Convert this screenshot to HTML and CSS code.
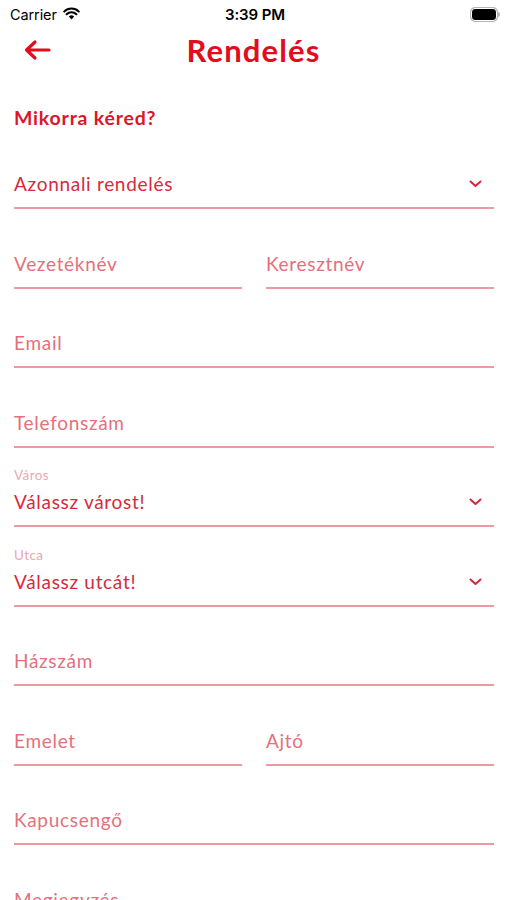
FILE: index.html
```html
<!DOCTYPE html>
<html lang="hu">
<head>
<meta charset="utf-8">
<title>Rendelés</title>
<link rel="stylesheet" href="styles.css">
</head>
<body>
<div class="screen">
  <div class="status">
    <div class="status-left">
      <span class="carrier">Carrier</span>
      <svg class="wifi" width="17" height="13" viewBox="0 0 17 13">
        <path d="M8.5 12.5 L5.9 9.6 A3.7 3.7 0 0 1 11.1 9.6 Z" fill="#000"/>
        <path d="M3.6 7.3 A6.9 6.9 0 0 1 13.4 7.3" fill="none" stroke="#000" stroke-width="2" stroke-linecap="round"/>
        <path d="M1.2 4.6 A10.3 10.3 0 0 1 15.8 4.6" fill="none" stroke="#000" stroke-width="2" stroke-linecap="round"/>
      </svg>
    </div>
    <span class="time">3:39 PM</span>
    <div class="battery"><div class="battery-fill"></div><div class="battery-tip"></div></div>
  </div>

  <div class="nav">
    <svg class="back" width="28" height="22" viewBox="0 0 28 22">
      <path d="M26 11 H4 M12 3 L3.5 11 L12 19" fill="none" stroke="#e30b1c" stroke-width="3.2" stroke-linecap="round" stroke-linejoin="round"/>
    </svg>
    <h1 class="title">Rendelés</h1>
  </div>

  <div class="content">
    <h2 class="section">Mikorra kéred?</h2>
    <div class="form">
      <div class="field select">
        <span class="value">Azonnali rendelés</span>
        <svg class="chev" width="13" height="8" viewBox="0 0 13 8"><path d="M1.5 1.5 L6.5 6 L11.5 1.5" fill="none" stroke="#d9243a" stroke-width="2" stroke-linecap="round" stroke-linejoin="round"/></svg>
      </div>
      <div class="row">
        <div class="field"><span class="ph">Vezetéknév</span></div>
        <div class="field"><span class="ph">Keresztnév</span></div>
      </div>
      <div class="field"><span class="ph">Email</span></div>
      <div class="field"><span class="ph">Telefonszám</span></div>
      <div class="field labeled">
        <span class="label">Város</span>
        <div class="select-line">
          <span class="value">Válassz várost!</span>
          <svg class="chev" width="13" height="8" viewBox="0 0 13 8"><path d="M1.5 1.5 L6.5 6 L11.5 1.5" fill="none" stroke="#d9243a" stroke-width="2" stroke-linecap="round" stroke-linejoin="round"/></svg>
        </div>
      </div>
      <div class="field labeled">
        <span class="label">Utca</span>
        <div class="select-line">
          <span class="value">Válassz utcát!</span>
          <svg class="chev" width="13" height="8" viewBox="0 0 13 8"><path d="M1.5 1.5 L6.5 6 L11.5 1.5" fill="none" stroke="#d9243a" stroke-width="2" stroke-linecap="round" stroke-linejoin="round"/></svg>
        </div>
      </div>
      <div class="field"><span class="ph">Házszám</span></div>
      <div class="row">
        <div class="field"><span class="ph">Emelet</span></div>
        <div class="field"><span class="ph">Ajtó</span></div>
      </div>
      <div class="field"><span class="ph">Kapucsengő</span></div>
      <div class="field"><span class="ph">Megjegyzés</span></div>
    </div>
  </div>
</div>
</body>
</html>
```

FILE: styles.css
```css
* { box-sizing: border-box; margin: 0; padding: 0; }
html, body { background: #fff; }
body { margin: 0; overflow: hidden; font-family: "Lato", "Open Sans", sans-serif; }
.screen { width: 507px; height: 900px; overflow: hidden; display: flex; flex-direction: column; }
.screen > * { flex-shrink: 0; }

.status { height: 28px; display: flex; align-items: center; justify-content: space-between; padding: 0 7px 0 10px; font-family: "Inter", "Liberation Sans", sans-serif; color: #000; }
.status-left { display: flex; align-items: center; gap: 6px; width: 120px; }
.carrier { font-size: 14.5px; letter-spacing: -0.1px; }
.wifi { margin-top: -1px; }
.time { font-size: 15px; font-weight: 600; letter-spacing: -0.1px; }
.battery { width: 120px; display: flex; justify-content: flex-end; align-items: center; }
.battery-fill { width: 26px; height: 13px; border-radius: 4px; background: #000; box-shadow: 0 0 0 1px #b5b5b5; border: 1.5px solid #fff; }
.battery-tip { width: 2px; height: 5px; background: #b5b5b5; border-radius: 0 2px 2px 0; margin-left: 1px; }

.nav { height: 44px; display: flex; align-items: center; justify-content: center; position: relative; }
.back { position: absolute; left: 23px; top: 11px; }
.title { font-size: 31px; font-weight: 700; color: #e30b1c; letter-spacing: 1.1px; line-height: 36px; }

.content { padding: 34px 13px 0 14px; }
.section { font-size: 19.5px; font-weight: 700; color: #dc1628; line-height: 24px; letter-spacing: 0.8px; }
.form { margin-top: 21.5px; display: flex; flex-direction: column; gap: 22px; }
.row { display: flex; gap: 24px; }
.row .field { flex: 1; }

.field { height: 57.5px; border-bottom: 2px solid #eb9aa1; display: flex; align-items: flex-end; padding-bottom: 11px; font-size: 19px; line-height: 24px; letter-spacing: 0.7px; font-weight: 400; }
.ph { color: #e4707c; }
.value { color: #d62a3d; }
.select { justify-content: space-between; }
.chev { margin-right: 12px; margin-bottom: 8px; }
.labeled { flex-direction: column; align-items: stretch; justify-content: flex-end; }
.label { font-size: 13.5px; line-height: 12px; color: #f0a5b3; margin-bottom: 9px; letter-spacing: 0.4px; }
.select-line { display: flex; justify-content: space-between; align-items: flex-end; }
```
